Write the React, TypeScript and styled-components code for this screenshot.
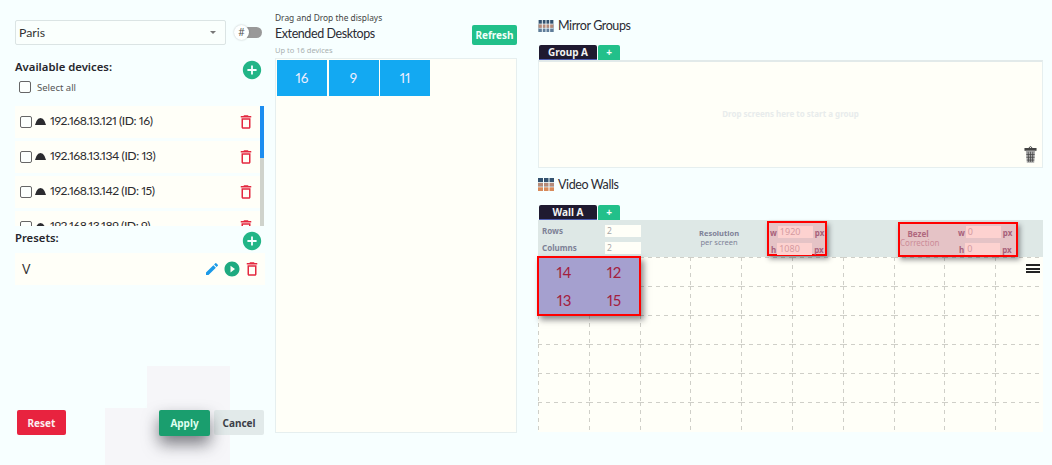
import React from "react";
import styled, { createGlobalStyle } from "styled-components";
import { MdDeleteOutline, MdEdit, MdPlayCircleFilled, MdAddCircle } from "react-icons/md";

const Global = createGlobalStyle`
  html, body { margin: 0; padding: 0; background: #f7ffff; }
  body { font-family: "Noto Sans", "Open Sans", sans-serif; color: #2b2b33; overflow: hidden; }
  * { box-sizing: border-box; }
`;

const readable = `"Lato", "Noto Sans", sans-serif`;

const Page = styled.div`
  position: relative;
  width: 1052px;
  height: 465px;
  display: flex;
  padding-left: 15px;
  overflow: hidden;
`;

const Left = styled.div`
  width: 250px;
  display: flex;
  flex-direction: column;
  padding-top: 20px;
  position: relative;
`;

const SelectRow = styled.div`
  display: flex;
  align-items: center;
  height: 25px;
  gap: 8px;
`;

const SelectBox = styled.div`
  width: 211px;
  height: 25px;
  border: 1px solid #dbe4e4;
  border-radius: 2px;
  background: #fafffd;
  display: flex;
  align-items: center;
  justify-content: space-between;
  padding: 0 4px 0 3px;
  font-family: ${readable};
  font-size: 12.3px;
  color: #333;
`;

const Caret = styled.span`
  width: 0;
  height: 0;
  margin-right: 5px;
  border-left: 3px solid transparent;
  border-right: 3px solid transparent;
  border-top: 3px solid #777;
`;

const Toggle = styled.div`
  position: relative;
  width: 26px;
  height: 11px;
  background: #999;
  border-radius: 6px;
  margin-left: 2px;
`;

const Thumb = styled.span`
  position: absolute;
  left: -2px;
  top: -2px;
  width: 15px;
  height: 15px;
  border-radius: 50%;
  background: #fdffff;
  box-shadow: 0 0 2px rgba(0, 0, 0, 0.25);
  font-size: 10px;
  line-height: 15px;
  text-align: center;
  color: #555;
`;

const HeadRow = styled.div<{ $top: number; $height: number }>`
  display: flex;
  justify-content: space-between;
  align-items: flex-start;
  margin-top: ${(p) => p.$top}px;
  height: ${(p) => p.$height}px;
`;

const HeadText = styled.div`
  font-size: 11.3px;
  font-weight: 600;
  color: #26262c;
  line-height: 16px;
`;

const AddIcon = styled(MdAddCircle)`
  color: #22b587;
  font-size: 22px;
  margin-right: 2px;
`;

const SelectAll = styled.div`
  display: flex;
  align-items: center;
  gap: 6px;
  margin-left: 4px;
  height: 14px;
  font-size: 9.5px;
  color: #555;
`;

const Check = styled.span`
  flex: none;
  width: 12px;
  height: 12px;
  border: 1.5px solid #666;
  border-radius: 2px;
  background: #fcfffd;
`;

const ListWrap = styled.div`
  position: relative;
  margin-top: 12px;
  height: 120px;
  overflow: hidden;
  padding-right: 5px;
`;

const ScrollTrack = styled.div`
  position: absolute;
  right: 1px;
  top: 0;
  width: 4px;
  height: 120px;
  background: #cfd3cc;
`;

const ScrollThumb = styled.div`
  width: 4px;
  height: 52px;
  background: #1c8df0;
`;

const DeviceRow = styled.div`
  display: flex;
  align-items: center;
  height: 32px;
  margin-bottom: 3px;
  background: #fffff8;
  padding: 0 5px 0 5px;
  font-family: ${readable};
  font-size: 12.2px;
  font-variant-numeric: proportional-nums;
  letter-spacing: -0.45px;
  color: #2b2b2f;
`;

const DeviceName = styled.span`
  flex: 1;
  margin-left: 4px;
  margin-bottom: 4px;
`;

const DeviceIcon = styled.svg`
  width: 11px;
  height: 7px;
  margin-left: 3px;
  margin-bottom: 2px;
  flex: none;
`;

const Bin = styled(MdDeleteOutline)`
  color: #e4283f;
  font-size: 18px;
  flex: none;
`;

const PresetRow = styled.div`
  display: flex;
  align-items: center;
  height: 32px;
  background: #fffff8;
  padding: 0 4px 0 7px;
  font-family: ${readable};
  font-size: 12.5px;
  color: #333;
`;

const PresetName = styled.span`
  flex: 1;
`;

const Pencil = styled(MdEdit)`
  color: #1b9ae8;
  font-size: 16px;
  margin-right: 3px;
`;

const Play = styled(MdPlayCircleFilled)`
  color: #1eaa80;
  font-size: 18px;
  margin-right: 2px;
`;

const Actions = styled.div`
  position: absolute;
  left: 2px;
  top: 410px;
  width: 247px;
  display: flex;
  align-items: flex-start;
`;

const Btn = styled.div<{ $bg: string; $fg: string; $w: number }>`
  width: ${(p) => p.$w}px;
  height: 25px;
  background: ${(p) => p.$bg};
  color: ${(p) => p.$fg};
  border-radius: 2px;
  font-size: 10px;
  font-weight: 700;
  display: flex;
  align-items: center;
  justify-content: center;
`;

const ApplyBtn = styled(Btn)`
  margin-left: 93px;
  margin-right: 4px;
  height: 26px;
  position: relative;
  box-shadow: 0 8px 16px rgba(40, 40, 50, 0.6);
`;

const Patch = styled.div<{ $x: number; $y: number; $w: number; $h: number }>`
  position: absolute;
  left: ${(p) => p.$x}px;
  top: ${(p) => p.$y}px;
  width: ${(p) => p.$w}px;
  height: ${(p) => p.$h}px;
  background: #f6f6f9;
`;

const Middle = styled.div`
  width: 242px;
  margin-left: 10px;
  display: flex;
  flex-direction: column;
  padding-top: 12px;
  position: relative;
`;

const Hint = styled.div`
  font-size: 8.4px;
  line-height: 12px;
  color: #444;
`;

const TitleBar = styled.div`
  display: flex;
  justify-content: space-between;
  align-items: flex-start;
  height: 20px;
  margin-top: 1px;
`;

const Title = styled.div`
  font-family: ${readable};
  font-size: 12.5px;
  letter-spacing: -0.42px;
  line-height: 17px;
  color: #2b2b33;
`;

const RefreshBtn = styled.div`
  width: 45px;
  height: 20px;
  border-radius: 2px;
  background: #22c08a;
  color: #f2fff9;
  font-size: 10px;
  font-weight: 700;
  padding-bottom: 1px;
  display: flex;
  align-items: center;
  justify-content: center;
`;

const SubHint = styled.div`
  font-size: 7.5px;
  line-height: 10px;
  color: #a9b0b0;
`;

const DropPanel = styled.div`
  margin-top: 3px;
  height: 375px;
  background: #fffff8;
  border: 1px solid #e6efef;
  padding: 1px;
  display: flex;
  gap: 1.5px;
  align-items: flex-start;
`;

const Tile = styled.div`
  width: 50px;
  height: 36px;
  background: #13a9f2;
  color: #eef;
  font-family: ${readable};
  font-variant-numeric: proportional-nums;
  font-size: 13.5px;
  display: flex;
  align-items: center;
  justify-content: center;
`;

const Right = styled.div`
  width: 505px;
  margin-left: 21px;
  position: relative;
  padding-top: 17px;
`;

const SectionHead = styled.div<{ $top?: number }>`
  display: flex;
  align-items: center;
  gap: 4px;
  height: 17px;
  margin-top: ${(p) => p.$top ?? 0}px;
  font-family: ${readable};
  font-size: 12.5px;
  letter-spacing: -0.4px;
  color: #2b2b33;
`;

const TabRow = styled.div<{ $top: number }>`
  display: flex;
  margin-top: ${(p) => p.$top}px;
  margin-left: 1px;
  align-items: flex-start;
`;

const Tab = styled.div`
  width: 58px;
  height: 15px;
  background: #1f1a30;
  border-bottom: 1px solid #4b5bb0;
  border-radius: 2px 2px 0 0;
  color: #f2f2f2;
  font-size: 10px;
  font-weight: 700;
  text-align: center;
  line-height: 14px;
`;

const PlusTab = styled.div`
  width: 22px;
  height: 15px;
  margin-left: 1px;
  background: #22c08a;
  border-radius: 2px 2px 0 0;
  color: #f2fff9;
  font-size: 10px;
  font-weight: 700;
  text-align: center;
  line-height: 14px;
`;

const GroupPanel = styled.div`
  position: relative;
  height: 108px;
  background: #fffff8;
  border: 1px solid #e6efef;
  border-top: 2px solid #e2eaea;
  display: flex;
  align-items: center;
  justify-content: center;
  padding-bottom: 2px;
  font-size: 8px;
  font-weight: 700;
  color: #e8ecec;
`;

const TrashCan = styled.svg`
  position: absolute;
  right: 5px;
  bottom: 4px;
  width: 13px;
  height: 17px;
`;

const Settings = styled.div`
  position: relative;
  height: 37px;
  background: #dee8e6;
`;

const SetLabel = styled.div<{ $x: number; $y: number }>`
  position: absolute;
  left: ${(p) => p.$x}px;
  top: ${(p) => p.$y}px;
  font-size: 8px;
  line-height: 10px;
  font-weight: 700;
  color: #7d8196;
`;

const SetInput = styled.div<{ $x: number; $y: number }>`
  position: absolute;
  left: ${(p) => p.$x}px;
  top: ${(p) => p.$y}px;
  width: 36px;
  height: 12px;
  background: #fffff8;
  font-size: 8.5px;
  line-height: 12px;
  padding-left: 2px;
  color: #a8a8a8;
`;

const ResLabel = styled.div`
  position: absolute;
  left: 151px;
  top: 9px;
  width: 60px;
  text-align: center;
  font-size: 7.5px;
  line-height: 9px;
  font-weight: 700;
  color: #7d8196;
`;

const ResSub = styled.div`
  font-weight: 400;
`;

const RedBox = styled.div<{ $x: number; $y: number; $w: number; $h: number }>`
  position: absolute;
  z-index: 2;
  left: ${(p) => p.$x}px;
  top: ${(p) => p.$y}px;
  width: ${(p) => p.$w}px;
  height: ${(p) => p.$h}px;
  border: 2px solid #f00;
  background: rgba(240, 140, 150, 0.4);
  box-shadow: 2px 3px 5px rgba(30, 30, 40, 0.45);
`;

const FieldRow = styled.div<{ $x: number; $y: number }>`
  position: absolute;
  left: ${(p) => p.$x}px;
  top: ${(p) => p.$y}px;
  display: flex;
  align-items: center;
  height: 12px;
  font-size: 8px;
  font-weight: 700;
  color: #a8607a;
`;

const FieldInput = styled.span`
  width: 35px;
  height: 12px;
  margin: 0 2px 0 1px;
  padding-left: 2px;
  background: #fdd2d0;
  font-size: 9px;
  line-height: 12px;
  font-weight: 400;
  color: #d59aa0;
`;

const BezelLabel = styled.div`
  position: absolute;
  left: 0;
  top: 5px;
  width: 36px;
  font-size: 8px;
  line-height: 9px;
  font-weight: 700;
  text-align: center;
  color: #b0687e;
`;

const BezelSub = styled.div`
  font-weight: 400;
  white-space: nowrap;
  color: #cc8c98;
`;

const GridWrap = styled.div`
  position: relative;
  height: 175px;
  background: #fffff8;
`;

const Cells = styled.div`
  display: grid;
  grid-template-columns: repeat(10, 50.8px);
  grid-template-rows: repeat(6, 29px);
  height: 175px;
  overflow: hidden;
`;

const Cell = styled.div`
  background:
    repeating-linear-gradient(to right, #cfcfc8 0 4px, transparent 4px 8px) top / 100% 1px no-repeat,
    repeating-linear-gradient(to bottom, #cfcfc8 0 4px, transparent 4px 8px) left / 1px 100% no-repeat;
`;

const WallGroup = styled.div`
  position: absolute;
  z-index: 3;
  left: -1px;
  top: -1px;
  width: 104px;
  height: 60px;
  border: 2px solid #f00;
  background: #a5a0cf;
  box-shadow: 3px 4px 6px rgba(30, 30, 40, 0.5);
  display: grid;
  grid-template-columns: 1fr 1fr;
  grid-template-rows: 1fr 1fr;
`;

const WallCell = styled.div`
  display: flex;
  align-items: center;
  justify-content: center;
  font-family: ${readable};
  font-variant-numeric: proportional-nums;
  font-size: 15px;
  color: #a3203e;
`;

const Burger = styled.div`
  position: absolute;
  right: 3px;
  top: 7px;
  width: 14px;
  height: 9px;
  border-top: 2px solid #222;
  border-bottom: 2px solid #222;
  &::after {
    content: "";
    display: block;
    height: 2px;
    margin-top: 1.5px;
    background: #222;
  }
`;

const TileIcon = ({ tall }: { tall?: boolean }) => (
  <svg width="16" height={tall ? 13 : 12} viewBox="0 0 16 13" style={{ flex: "none" }}>
    <rect width="16" height="13" fill="#33526f" />
    <rect y="4.5" width="16" height="4" fill="#b58a78" />
    <rect y="9" width="16" height="4" fill={tall ? "#d88a5a" : "#5f7d9a"} />
    {(tall ? [5, 10.5] : [3.5, 7.5, 11.5]).map((x) => (
      <rect key={x} x={x} width="1" height="13" fill="#f7ffff" />
    ))}
    {[4, 8.5].map((y) => (
      <rect key={y} y={y} width="16" height="0.8" fill="#f7ffff" />
    ))}
  </svg>
);

const devices = ["192.168.13.121 (ID: 16)", "192.168.13.134 (ID: 13)", "192.168.13.142 (ID: 15)", "192.168.13.189 (ID: 9)"];

export default function App() {
  return (
    <Page>
      <Global />
      <Patch $x={147} $y={366} $w={83} $h={99} />
      <Patch $x={105} $y={408} $w={125} $h={57} />
      <Left>
        <SelectRow>
          <SelectBox>
            Paris
            <Caret />
          </SelectBox>
          <Toggle>
            <Thumb>#</Thumb>
          </Toggle>
        </SelectRow>
        <HeadRow $top={14} $height={21}>
          <HeadText>Available devices:</HeadText>
          <AddIcon />
        </HeadRow>
        <SelectAll>
          <Check />
          Select all
        </SelectAll>
        <ListWrap>
          {devices.map((d) => (
            <DeviceRow key={d}>
              <Check />
              <DeviceIcon viewBox="0 0 11 7">
                <path d="M0 7 L1.5 3 Q3 0 5.5 0 Q8 0 9.5 3 L11 7 Z" fill="#2b2b2f" />
              </DeviceIcon>
              <DeviceName>{d}</DeviceName>
              <Bin />
            </DeviceRow>
          ))}
          <ScrollTrack>
            <ScrollThumb />
          </ScrollTrack>
        </ListWrap>
        <HeadRow $top={4} $height={23}>
          <HeadText>Presets:</HeadText>
          <AddIcon />
        </HeadRow>
        <PresetRow>
          <PresetName>V</PresetName>
          <Pencil />
          <Play />
          <Bin />
        </PresetRow>
        <Actions>
          <Btn $bg="#e8233f" $fg="#fbeef0" $w={49}>Reset</Btn>
          <ApplyBtn $bg="#1a9e6e" $fg="#dffff0" $w={51}>Apply</ApplyBtn>
          <Btn $bg="#e2eaea" $fg="#3c3f48" $w={50}>Cancel</Btn>
        </Actions>
      </Left>
      <Middle>
        <Hint>Drag and Drop the displays</Hint>
        <TitleBar>
          <Title>Extended Desktops</Title>
          <RefreshBtn>Refresh</RefreshBtn>
        </TitleBar>
        <SubHint>Up to 16 devices</SubHint>
        <DropPanel>
          <Tile>16</Tile>
          <Tile>9</Tile>
          <Tile>11</Tile>
        </DropPanel>
      </Middle>
      <Right>
        <SectionHead>
          <TileIcon />
          Mirror Groups
        </SectionHead>
        <TabRow $top={11}>
          <Tab>Group A</Tab>
          <PlusTab>+</PlusTab>
        </TabRow>
        <GroupPanel>
          Drop screens here to start a group
          <TrashCan viewBox="0 0 14 18">
            <path d="M5 2 Q7 -1 9 2" fill="none" stroke="#333" />
            <rect x="0.5" y="2" width="13" height="3" fill="#444" />
            <path d="M2 5 H12 L11 18 H3 Z" fill="#aaa" />
            <path d="M4.5 6 L5 17 M7 6 V17 M9.5 6 L9 17 M2.5 9 H11.5 M2.5 12 H11.5 M3 15 H11" stroke="#444" strokeWidth="0.8" />
          </TrashCan>
        </GroupPanel>
        <SectionHead $top={8}>
          <TileIcon tall />
          Video Walls
        </SectionHead>
        <TabRow $top={12}>
          <Tab>Wall A</Tab>
          <PlusTab>+</PlusTab>
        </TabRow>
        <Settings>
          <SetLabel $x={4} $y={6}>Rows</SetLabel>
          <SetInput $x={67} $y={5}>2</SetInput>
          <SetLabel $x={4} $y={23}>Columns</SetLabel>
          <SetInput $x={67} $y={22}>2</SetInput>
          <ResLabel>
            Resolution
            <ResSub>per screen</ResSub>
          </ResLabel>
          <RedBox $x={229} $y={1} $w={60} $h={35}>
            <FieldRow $x={1} $y={3}>w<FieldInput>1920</FieldInput>px</FieldRow>
            <FieldRow $x={2} $y={20}>h<FieldInput>1080</FieldInput>px</FieldRow>
          </RedBox>
          <RedBox $x={360} $y={2} $w={120} $h={35}>
            <BezelLabel>
              Bezel
              <BezelSub>Correction</BezelSub>
            </BezelLabel>
            <FieldRow $x={58} $y={2}>w<FieldInput>0</FieldInput>px</FieldRow>
            <FieldRow $x={59} $y={19}>h<FieldInput>0</FieldInput>px</FieldRow>
          </RedBox>
        </Settings>
        <GridWrap>
          <Cells>
            {Array.from({ length: 60 }, (_, i) => (
              <Cell key={i} />
            ))}
          </Cells>
          <WallGroup>
            <WallCell>14</WallCell>
            <WallCell>12</WallCell>
            <WallCell>13</WallCell>
            <WallCell>15</WallCell>
          </WallGroup>
          <Burger />
        </GridWrap>
      </Right>
    </Page>
  );
}
